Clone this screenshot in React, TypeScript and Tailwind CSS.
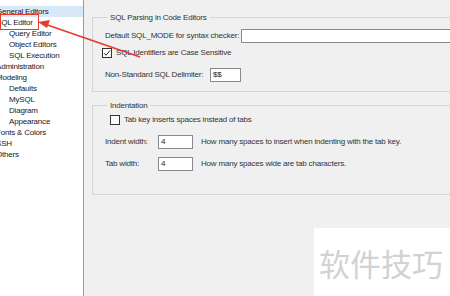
import React from "react";

const tree: { label: string; depth: number; selected?: boolean }[] = [
  { label: "General Editors", depth: 0, selected: true },
  { label: "SQL Editor", depth: 0 },
  { label: "Query Editor", depth: 1 },
  { label: "Object Editors", depth: 1 },
  { label: "SQL Execution", depth: 1 },
  { label: "Administration", depth: 0 },
  { label: "Modeling", depth: 0 },
  { label: "Defaults", depth: 1 },
  { label: "MySQL", depth: 1 },
  { label: "Diagram", depth: 1 },
  { label: "Appearance", depth: 1 },
  { label: "Fonts & Colors", depth: 0 },
  { label: "SSH", depth: 0 },
  { label: "Others", depth: 0 },
];

function CheckBox({ checked }: { checked?: boolean }) {
  return (
    <span className="flex h-[10px] w-[10px] shrink-0 items-center justify-center border border-[#333] bg-white">
      {checked && (
        <svg width="8" height="8" viewBox="0 0 8 8">
          <path d="M1 4.2 L3 6.2 L7 1.5" fill="none" stroke="#222" strokeWidth="1" />
        </svg>
      )}
    </span>
  );
}

function Field({ value, className }: { value?: string; className: string }) {
  return (
    <div className={`h-[14px] shrink-0 border border-[#8a8a8a] bg-white pl-[2px] text-[8px] leading-[12px] text-[#222] ${className}`}>
      {value}
    </div>
  );
}

export default function App() {
  return (
    <div
      className="relative flex h-[296px] w-[450px] overflow-hidden whitespace-nowrap bg-[#f0f0f0] text-[8px] tracking-[-0.2px] text-[#333]"
      style={{ fontFamily: '"Liberation Sans", Arial, sans-serif' }}
    >
      {/* tree */}
      <div className="w-[84px] shrink-0 border-r border-[#9c9c9c] bg-white pt-[6px]">
        {tree.map((item) => (
          <div
            key={item.label}
            className={`flex h-[11px] items-center text-[#1a1a1a] ${
              item.selected ? "bg-[#d9e8f7]" : ""
            } ${item.depth ? "pl-[9px]" : "-ml-[4px]"}`}
          >
            {item.label}
          </div>
        ))}
      </div>

      {/* settings */}
      <div className="flex min-w-0 flex-1 flex-col pl-[8px]">
        <fieldset className="mt-[12px] w-[400px] shrink-0 border border-[#d5d5d5] pb-[9px] pl-[12px]">
          <legend className="ml-[2px] px-[3px] leading-[11px]">SQL Parsing in Code Editors</legend>
          <div className="mt-[6px] flex items-center">
            <span className="w-[136px] shrink-0">Default SQL_MODE for syntax checker:</span>
            <Field className="w-[250px]" />
          </div>
          <div className="-ml-[3px] mt-[4px] flex items-center gap-[4px]">
            <CheckBox checked />
            <span>SQL Identifiers are Case Sensitive</span>
          </div>
          <div className="mt-[9px] flex items-center">
            <span className="w-[105px] shrink-0">Non-Standard SQL Delimiter:</span>
            <Field className="w-[31px]" value="$$" />
          </div>
        </fieldset>

        <fieldset className="mt-[8px] w-[400px] shrink-0 border border-[#d5d5d5] pb-[23px] pl-[12px]">
          <legend className="ml-[2px] px-[3px] leading-[11px]">Indentation</legend>
          <div className="mt-[3px] flex items-center gap-[4px] pl-[5px]">
            <CheckBox />
            <span>Tab key inserts spaces instead of tabs</span>
          </div>
          <div className="mt-[9px] flex items-center">
            <span className="w-[53px] shrink-0">Indent width:</span>
            <Field className="w-[35px]" value="4" />
            <span className="ml-[8px]">How many spaces to insert when indenting with the tab key.</span>
          </div>
          <div className="mt-[8px] flex items-center">
            <span className="w-[53px] shrink-0">Tab width:</span>
            <Field className="w-[35px]" value="4" />
            <span className="ml-[8px]">How many spaces wide are tab characters.</span>
          </div>
        </fieldset>
      </div>

      {/* annotation overlay */}
      <div className="pointer-events-none absolute left-0 top-[14px] h-[16px] w-[39px] border border-[#e53a2e]" />
      <svg className="pointer-events-none absolute left-0 top-0" width="450" height="296">
        <line x1="140" y1="57" x2="46" y2="24.5" stroke="#e53a2e" strokeWidth="1.6" />
        <path d="M38 22 L50 20 L47 28 Z" fill="#e53a2e" />
      </svg>

      {/* watermark */}
      <div className="absolute left-[314px] top-[228px] flex h-[68px] w-[136px] items-center bg-white pl-[5px]">
        <span
          className="text-[31px] leading-none tracking-normal text-[#d2d2d2]"
          style={{ fontFamily: '"Noto Sans CJK SC", sans-serif' }}
        >
          软件技巧
        </span>
      </div>
    </div>
  );
}
